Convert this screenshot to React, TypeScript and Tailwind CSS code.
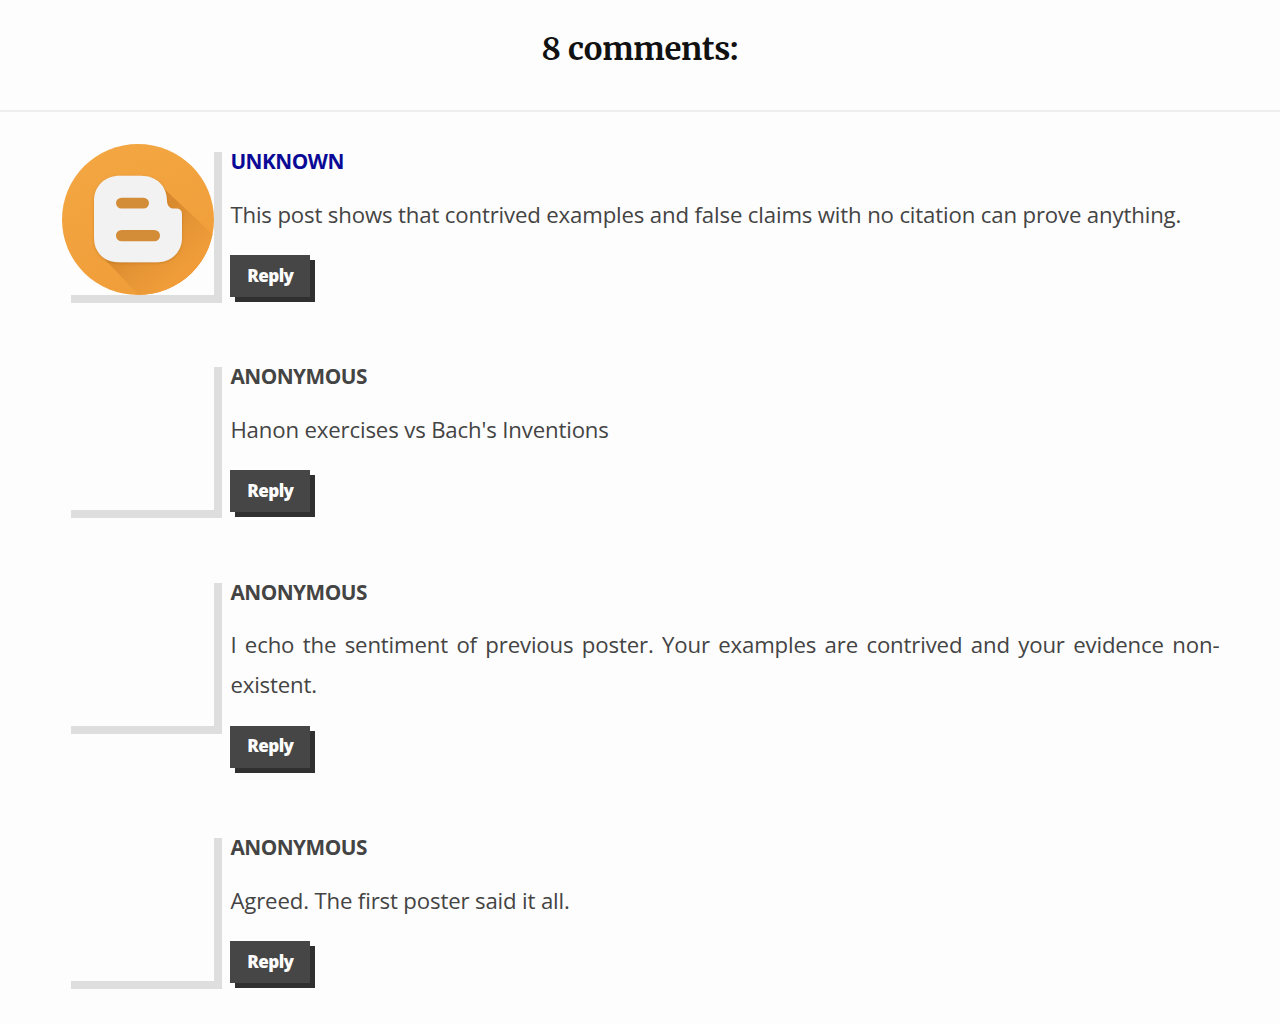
import React from "react";

function BloggerAvatar() {
  return (
    <svg viewBox="0 0 152 152" preserveAspectRatio="none" className="-ml-px block h-[151px] w-[152px]">
      <defs>
        <linearGradient id="disc" x1="0" y1="0" x2="0.4" y2="1">
          <stop offset="0" stopColor="#f3a742" />
          <stop offset="1" stopColor="#f09e3a" />
        </linearGradient>
        <linearGradient id="shade" gradientUnits="userSpaceOnUse" x1="84" y1="84" x2="122" y2="126">
          <stop offset="0" stopColor="#d98a2e" />
          <stop offset="0.5" stopColor="#e79636" />
          <stop offset="1" stopColor="#ef9c39" />
        </linearGradient>
        <clipPath id="round"><circle cx="76" cy="76" r="76" /></clipPath>
        <filter id="soft" x="-20%" y="-20%" width="140%" height="140%">
          <feDropShadow dx="0" dy="1" stdDeviation="1.5" floodColor="#9b611d" floodOpacity="0.4" />
        </filter>
      </defs>
      <circle cx="76" cy="76" r="76" fill="url(#disc)" />
      <g clipPath="url(#round)">
        <path d="M39 112L99 42L160 100L160 160L84 160Z" fill="url(#shade)" />
      </g>
      <path filter="url(#soft)" d="M58 32H79C95 32 105 43 105 57C105 62 108 65 112 65H114Q120 65 120 71V94C120 109 109 119 95 119H57C42 119 32 109 32 94V58C32 42 43 32 58 32Z" fill="#f2f2f2" />
      <rect x="54" y="54" width="33" height="11" rx="5.5" fill="#d38d38" />
      <rect x="54" y="86.5" width="44" height="11.5" rx="5.7" fill="#d38d38" />
    </svg>
  );
}

type CommentProps = { author: string; text: string; linked?: boolean; height: string };

function Comment({ author, text, linked, height }: CommentProps) {
  return (
    <article className={`flex ${height}`}>
      <div className="h-[151px] w-[151px] shrink-0 shadow-[8px_8px_0_#dedede] bg-[#fdfdfd]">
        {linked && <BloggerAvatar />}
      </div>
      <div className="ml-[16.4px] w-[989px]">
        <h3 className={`text-[20.8px] font-bold uppercase leading-[34px] tracking-[-0.5px] ${linked ? "text-[#0a0a96]" : "text-[#444444]"}`}>{author}</h3>
        <p className="mt-[16.8px] text-justify text-[22.2px] leading-[40.1px] tracking-[-0.15px]">{text}</p>
        <button className="mt-5 flex h-[42px] w-20 items-center justify-center bg-[#464646] pb-px text-[17.1px] font-extrabold tracking-[-0.6px] text-[#fdfdfd] shadow-[5px_5px_0_#303030]">Reply</button>
      </div>
    </article>
  );
}

const comments: CommentProps[] = [
  { author: "Unknown", text: "This post shows that contrived examples and false claims with no citation can prove anything.", linked: true, height: "h-[215.3px]" },
  { author: "Anonymous", text: "Hanon exercises vs Bach's Inventions", height: "h-[215.3px]" },
  { author: "Anonymous", text: "I echo the sentiment of previous poster. Your examples are contrived and your evidence non-existent.", height: "h-[255.5px]" },
  { author: "Anonymous", text: "Agreed. The first poster said it all.", height: "h-[215.3px]" },
];

export default function App() {
  return (
    <main className="h-screen overflow-hidden bg-[#fdfdfd] font-['Open_Sans',sans-serif] text-[#444444]">
      <h2 className="h-[112px] border-b-2 border-[#eeeeee] pt-7 text-center font-[Merriweather,'Noto_Serif','DejaVu_Serif',serif] text-[31.2px] font-bold leading-[42px] tracking-[-0.15px] text-[#111111]">8 comments:</h2>
      <section className="pl-[63px] pt-8">
        {comments.map((comment, index) => <Comment key={index} {...comment} />)}
      </section>
    </main>
  );
}
